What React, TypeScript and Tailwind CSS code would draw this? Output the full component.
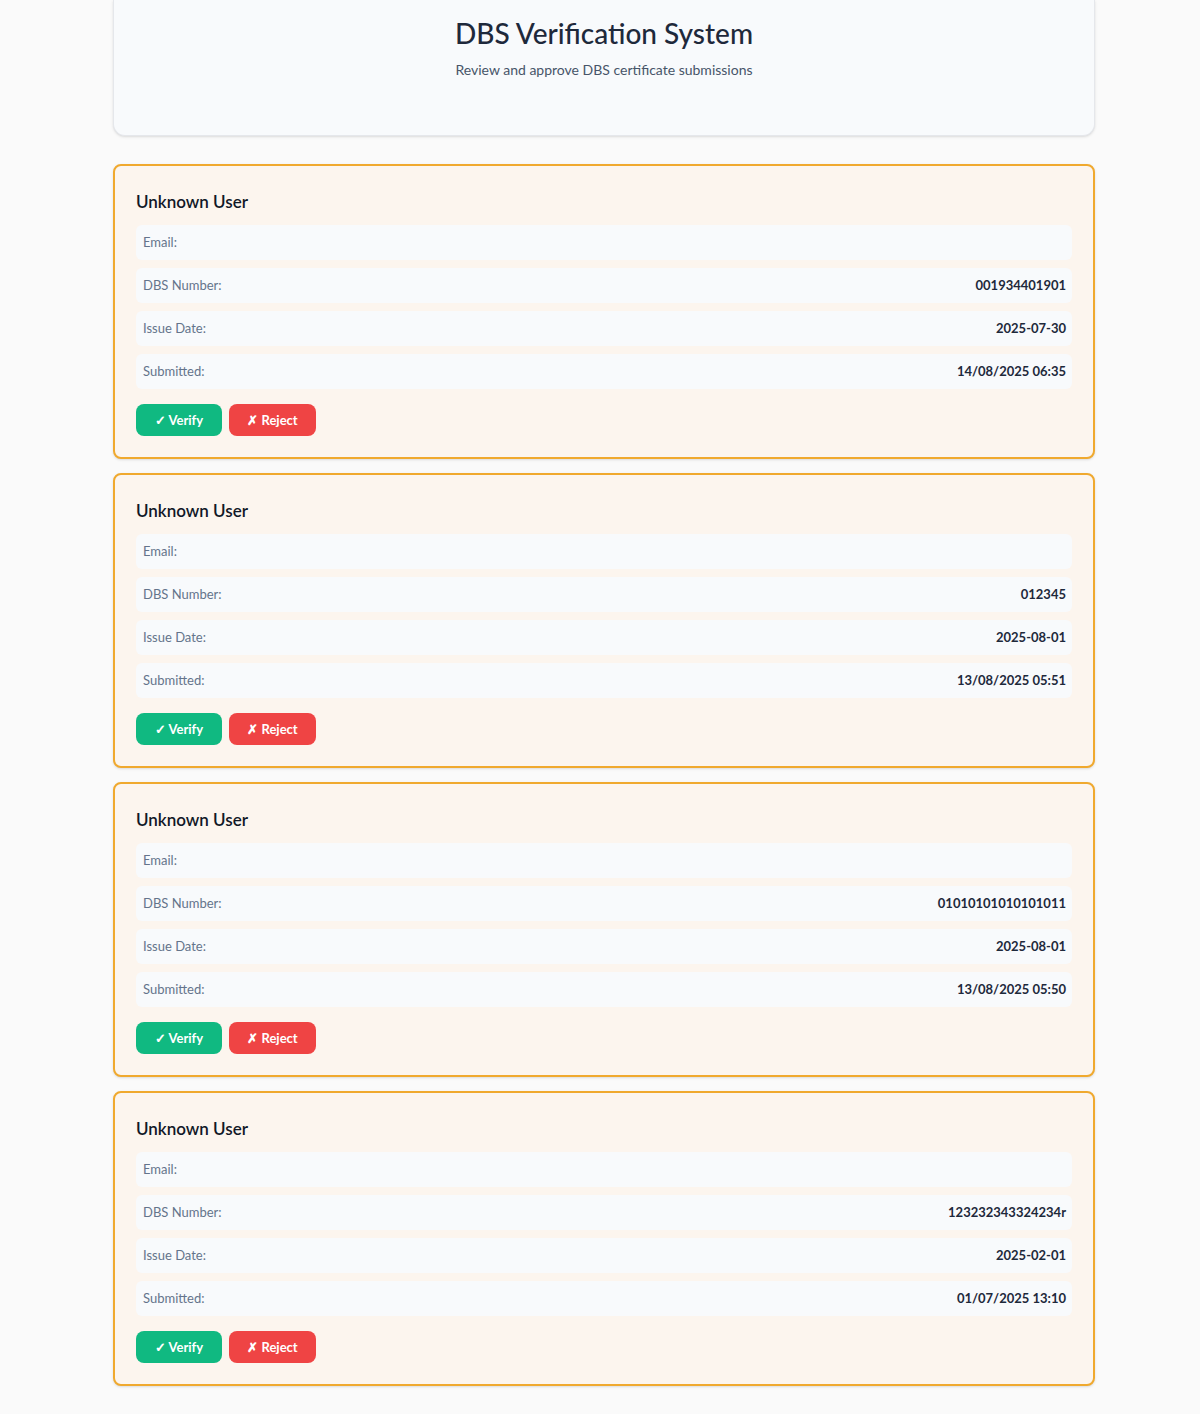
const submissions = [
  { dbs: "001934401901", issued: "2025-07-30", submitted: "14/08/2025 06:35" },
  { dbs: "012345", issued: "2025-08-01", submitted: "13/08/2025 05:51" },
  { dbs: "01010101010101011", issued: "2025-08-01", submitted: "13/08/2025 05:50" },
  { dbs: "123232343324234r", issued: "2025-02-01", submitted: "01/07/2025 13:10" },
];

function Row({ label, value }: { label: string; value?: string }) {
  return (
    <div className="flex h-[35px] items-center justify-between rounded-md bg-[#f8fafc] pl-[7px] pr-[6px] text-[13px]">
      <span className="text-[#64748b]">{label}</span>
      <span className="font-bold text-[#1e293b]">{value}</span>
    </div>
  );
}

function SubmissionCard({ s }: { s: (typeof submissions)[number] }) {
  return (
    <div className="rounded-lg border-2 border-[#f0a92e] bg-[#fcf5ee] px-[21px] pt-[22px] pb-[21px] shadow-sm">
      <h2 className="mb-[9px] text-[17px] leading-[28px] font-semibold text-[#111827]">
        Unknown User
      </h2>
      <div className="flex flex-col gap-2">
        <Row label="Email:" />
        <Row label="DBS Number:" value={s.dbs} />
        <Row label="Issue Date:" value={s.issued} />
        <Row label="Submitted:" value={s.submitted} />
      </div>
      <div className="mt-[15px] flex gap-[7px]">
        <button className="h-[32px] w-[86px] rounded-lg bg-[#10b981] pt-px text-[13px] font-bold text-white">
          ✓ Verify
        </button>
        <button className="h-[32px] w-[87px] rounded-lg bg-[#ef4444] pt-px text-[13px] font-bold text-white">
          ✗ Reject
        </button>
      </div>
    </div>
  );
}

export default function App() {
  return (
    <div
      className="min-h-[1414px] bg-[#fafafa] pr-[105px] pl-[113px]"
      style={{ fontFamily: "Lato, 'Noto Sans', sans-serif" }}
    >
      <div className="flex h-[136px] flex-col items-center rounded-b-xl border border-t-0 border-[#e5e7eb] bg-[#f8fafc] pt-[15px] shadow-sm">
        <h1 className="text-[28px] leading-[36px] font-medium text-[#1e293b]">
          DBS Verification System
        </h1>
        <p className="mt-[9px] text-[14px] leading-[20px] text-[#475569]">
          Review and approve DBS certificate submissions
        </p>
      </div>
      <div className="mt-[28px] flex flex-col gap-[14px] pb-[27px]">
        {submissions.map((s) => (
          <SubmissionCard key={s.dbs} s={s} />
        ))}
      </div>
    </div>
  );
}
